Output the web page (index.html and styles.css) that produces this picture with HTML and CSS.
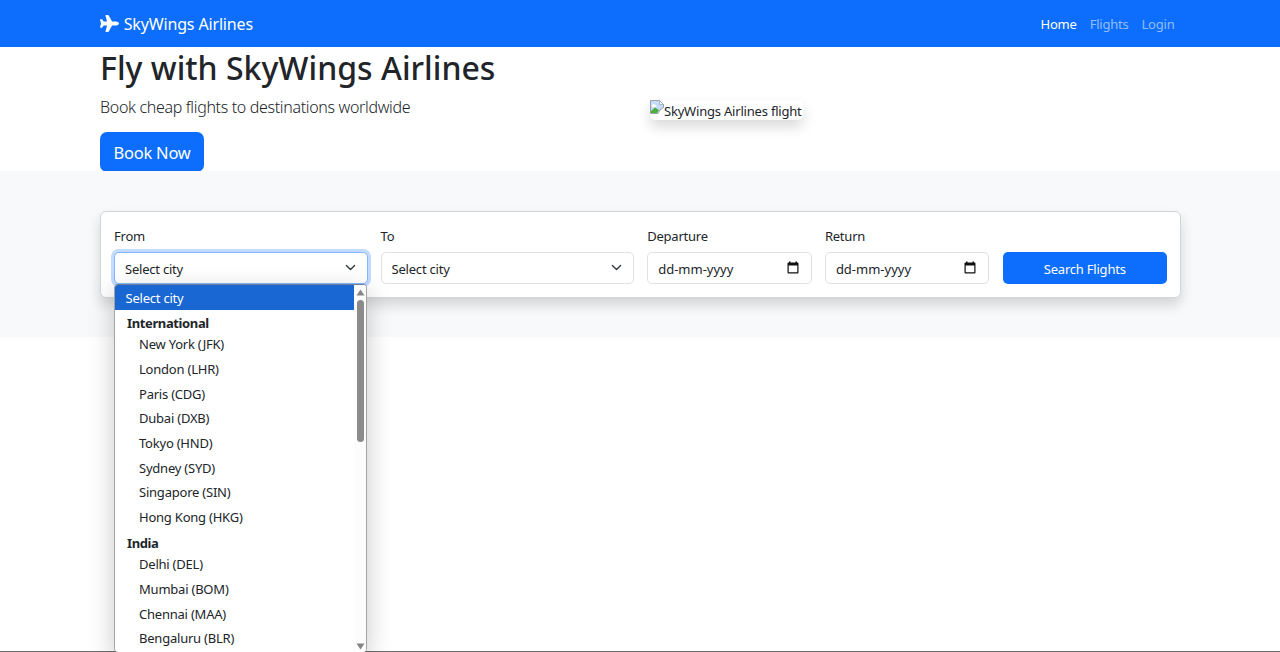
FILE: index.html
```html
<!DOCTYPE html>
<html lang="en">
<head>
<meta charset="utf-8">
<title>SkyWings Airlines</title>
<link rel="stylesheet" href="styles.css">
</head>
<body>
<nav class="navbar">
  <div class="container navbar-inner">
    <a class="brand"><svg class="plane" viewBox="0 0 576 512"><path fill="currentColor" d="M482.3 192c34.200 0 93.700 29 93.700 64 0 36-59.500 64-93.700 64H365.700L265.200 495.900c-5.700 10-16.300 16.100-27.800 16.100h-56.200c-10.600 0-18.300-10.200-15.400-20.400l49-171.600H112l-43.200 57.600c-3 4-7.800 6.400-12.800 6.400H14c-7.800 0-14-6.300-14-14 0-1.300.2-2.600.5-3.900L32 256 .5 145.900c-.4-1.300-.5-2.600-.5-3.900 0-7.800 6.300-14 14-14h42c5 0 9.800 2.400 12.800 6.400L112 192h102.900l-49-171.600C162.900 10.200 170.600 0 181.200 0h56.200c11.500 0 22.100 6.200 27.800 16.100L365.700 192z"/></svg><span>SkyWings Airlines</span></a>
    <div class="links"><a class="active">Home</a><a>Flights</a><a>Login</a></div>
  </div>
</nav>
<header class="container hero">
  <div class="hero-copy">
    <h1>Fly with SkyWings Airlines</h1>
    <p class="lead">Book cheap flights to destinations worldwide</p>
    <a class="book">Book Now</a>
  </div>
  <div class="hero-media">
    <div class="missing-image">
      <svg class="broken" viewBox="0 0 14 14"><path d="M.5.500h9l4 4v3L10 10l-2 3.500H.5z" fill="#c6dafb" stroke="#9aa0a8"/><path d="M9.500.500v4h4z" fill="#fff" stroke="#9aa0a8" stroke-width=".7"/><path d="M2 5.500c0-2 3-2 3-.500 2 0 2 2 0 2H2z" fill="#fff"/><path d="M1 13V11l4-3.500L9 10l-2 3z" fill="#4caf3a"/></svg><span>SkyWings Airlines flight</span>
    </div>
  </div>
</header>
<section class="search">
  <div class="container">
    <form class="card">
      <div class="field wide">
        <label>From</label>
        <div class="control focus"><span>Select city</span><svg class="chevron" viewBox="0 0 16 16"><path fill="none" stroke="#343a40" stroke-linecap="round" stroke-linejoin="round" stroke-width="2" d="m2 5 6 6 6-6"/></svg></div>
        <div class="menu">
          <div class="options">
            <div class="option selected">Select city</div>
            <div class="group">International</div>
            <div class="option">New York (JFK)</div>
            <div class="option">London (LHR)</div>
            <div class="option">Paris (CDG)</div>
            <div class="option">Dubai (DXB)</div>
            <div class="option">Tokyo (HND)</div>
            <div class="option">Sydney (SYD)</div>
            <div class="option">Singapore (SIN)</div>
            <div class="option">Hong Kong (HKG)</div>
            <div class="group">India</div>
            <div class="option">Delhi (DEL)</div>
            <div class="option">Mumbai (BOM)</div>
            <div class="option">Chennai (MAA)</div>
            <div class="option">Bengaluru (BLR)</div>
          </div>
          <div class="scrollbar">
            <svg class="arrow" viewBox="0 0 9 7"><path d="M4.500.500 8.500 6.500h-8z" fill="#858585"/></svg>
            <div class="thumb"></div>
            <svg class="arrow" viewBox="0 0 9 7"><path d="M4.500 6.500 8.500.500h-8z" fill="#858585"/></svg>
          </div>
        </div>
      </div>
      <div class="field wide">
        <label>To</label>
        <div class="control"><span>Select city</span><svg class="chevron" viewBox="0 0 16 16"><path fill="none" stroke="#343a40" stroke-linecap="round" stroke-linejoin="round" stroke-width="2" d="m2 5 6 6 6-6"/></svg></div>
      </div>
      <div class="field">
        <label>Departure</label>
        <div class="control date"><span>dd-mm-yyyy</span><svg class="calendar" viewBox="0 0 12 13"><path fill="#111" fill-rule="evenodd" d="M2 .500h1.500V1.500h5V.500H10V1.500h.500q1 0 1 1V11.500q0 1-1 1h-9q-1 0-1-1V2.500q0-1 1-1H2zM1.700 4.500v6.800h8.600V4.500z"/></svg></div>
      </div>
      <div class="field">
        <label>Return</label>
        <div class="control date"><span>dd-mm-yyyy</span><svg class="calendar" viewBox="0 0 12 13"><path fill="#111" fill-rule="evenodd" d="M2 .500h1.500V1.500h5V.500H10V1.500h.500q1 0 1 1V11.500q0 1-1 1h-9q-1 0-1-1V2.500q0-1 1-1H2zM1.700 4.500v6.800h8.600V4.500z"/></svg></div>
      </div>
      <div class="field submit"><a class="search-button">Search Flights</a></div>
    </form>
  </div>
</section>
<div class="page-edge"></div>
</body>
</html>
```
FILE: styles.css
```css
* { box-sizing: border-box; }
html, body { height: 100%; }
body {
  margin: 0;
  display: flex;
  flex-direction: column;
  overflow: hidden;
  background: #fff;
  color: #212529;
  font: 13px/20px "Noto Sans", "Open Sans", sans-serif;
  letter-spacing: -0.22px;
  white-space: nowrap;
}
.container { width: 1080px; margin: 0 auto; }
.navbar { height: 47px; flex: none; background: #0d6efd; color: #fff; }
.navbar-inner { height: 100%; display: flex; align-items: center; justify-content: space-between; }
.brand { display: flex; align-items: center; gap: 4.700px; font-size: 16px; letter-spacing: -0.15px; }
.plane { width: 19px; height: 17px; }
.links { display: flex; gap: 13px; padding: 1px 5.500px 0 0; color: rgba(255,255,255,.55); }
.links .active { color: #fff; }
.hero { height: 124px; flex: none; display: grid; grid-template-columns: 550px 1fr; align-items: center; }
.hero-copy { height: 124px; }
h1 { margin: 1px 0 7px; font-size: 32px; line-height: 40px; font-weight: 550; letter-spacing: 0.01px; }
.lead { margin: 0 0 12px; font-size: 16px; line-height: 25px; font-weight: 300; letter-spacing: -0.33px; }
.book { display: block; width: 104px; height: 39.500px; border-radius: 7px; background: #0d6efd; color: #fff; text-align: center; font-size: 16.500px; line-height: 41px; }
.missing-image { display: flex; width: 153px; height: 20px; margin-top: 2px; border-radius: 5px; box-shadow: 0 7px 13px rgba(0,0,0,.15); background: #fff; }
.missing-image span { line-height: 22px; letter-spacing: -0.2px; }
.broken { width: 14px; height: 14px; flex: none; }
.search { height: 166px; flex: none; padding-top: 40px; background: #f8f9fa; }
.card { display: flex; gap: 13.300px; width: 1081px; height: 86.500px; margin: 0; padding: 14px 13px 0; background: #fff; border: 1px solid #d3d5d7; border-radius: 6px; box-shadow: 0 7px 13px rgba(0,0,0,.15); }
.field { position: relative; width: 164.400px; }
.field.wide { width: 253.300px; }
label { display: block; height: 26px; }
.control { display: flex; align-items: center; justify-content: space-between; height: 32px; padding: 1px 12px 0 10px; border: 1px solid #dee2e6; border-radius: 5px; background: #fff; }
.wide .control { padding-right: 11px; }
.control.focus { width: 254px; border-color: #86b7fe; box-shadow: 0 0 0 3px #c2dbfe; }
.date span { letter-spacing: 0; }
.chevron { width: 11px; height: 11px; margin-top: -2px; }
.calendar { width: 12px; height: 13px; margin-top: -2px; }
.submit { padding-top: 26px; }
.search-button { display: block; height: 32px; line-height: 34px; border-radius: 5px; background: #0d6efd; color: #fff; text-align: center; }
.menu { position: absolute; z-index: 2; left: 0; top: 58px; width: 253px; height: 368px; display: flex; border: 1px solid #a4a4a4; border-top-color: #6e7f99; border-bottom: 0; border-radius: 4px; overflow: hidden; background: #fff; box-shadow: 0 8px 26px rgba(0,0,0,.22); }
.options { flex: 1; }
.option { height: 24.650px; padding-left: 24px; line-height: 25px; }
.option.selected { height: 24.600px; padding-left: 10.500px; line-height: 26px; background: #1967d2; color: #fff; }
.group { height: 22.800px; padding-left: 12px; line-height: 26px; font-weight: 700; letter-spacing: -0.38px; }
.scrollbar { width: 12px; padding: 4px 0 2px; display: flex; flex-direction: column; align-items: center; background: #fcfcfc; }
.arrow { width: 9px; height: 7px; }
.thumb { width: 7px; height: 142px; margin: 4px 0 auto; border-radius: 4px; background: #8b8b8b; }
.page-edge { height: 1px; flex: none; margin-top: auto; background: #6b6b6b; }
```
